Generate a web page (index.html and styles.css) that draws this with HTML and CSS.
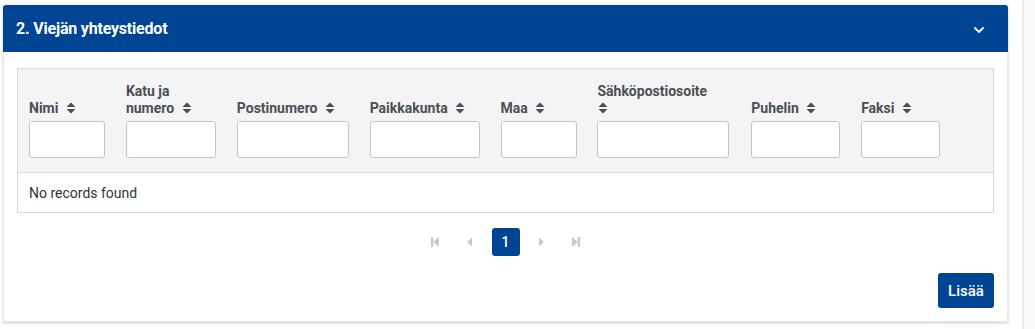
FILE: index.html
```html
<!DOCTYPE html>
<html lang="fi">
<head>
<meta charset="utf-8">
<title>Viejän yhteystiedot</title>
<link rel="stylesheet" href="styles.css">
</head>
<body>
<div class="page">
  <main class="main">
    <section class="panel">
      <header class="panel-head">
        <h2 class="panel-title">2. Viejän yhteystiedot</h2>
        <svg class="chev" width="10" height="6" viewBox="0 0 10 6"><path d="M1 1 L5 5 L9 1" fill="none" stroke="#fff" stroke-width="1.8" stroke-linecap="round" stroke-linejoin="round"/></svg>
      </header>
      <div class="panel-body">
        <div class="table">
          <div class="thead">
            <div class="th c1"><div class="lbl">Nimi <svg class="sort" viewBox="0 0 10 12"><path d="M0.5 5 L5 0.5 L9.5 5Z M0.5 7 L5 11.5 L9.5 7Z"/></svg></div><input class="inp w1" type="text"></div>
            <div class="th c2"><div class="lbl">Katu ja<br>numero <svg class="sort" viewBox="0 0 10 12"><path d="M0.5 5 L5 0.5 L9.5 5Z M0.5 7 L5 11.5 L9.5 7Z"/></svg></div><input class="inp w2" type="text"></div>
            <div class="th c3"><div class="lbl">Postinumero <svg class="sort" viewBox="0 0 10 12"><path d="M0.5 5 L5 0.5 L9.5 5Z M0.5 7 L5 11.5 L9.5 7Z"/></svg></div><input class="inp w3" type="text"></div>
            <div class="th c4"><div class="lbl">Paikkakunta <svg class="sort" viewBox="0 0 10 12"><path d="M0.5 5 L5 0.5 L9.5 5Z M0.5 7 L5 11.5 L9.5 7Z"/></svg></div><input class="inp w4" type="text"></div>
            <div class="th c5"><div class="lbl">Maa <svg class="sort" viewBox="0 0 10 12"><path d="M0.5 5 L5 0.5 L9.5 5Z M0.5 7 L5 11.5 L9.5 7Z"/></svg></div><input class="inp w5" type="text"></div>
            <div class="th c6"><div class="lbl">Sähköpostiosoite<br><svg class="sort" viewBox="0 0 10 12"><path d="M0.5 5 L5 0.5 L9.5 5Z M0.5 7 L5 11.5 L9.5 7Z"/></svg></div><input class="inp w6" type="text"></div>
            <div class="th c7"><div class="lbl">Puhelin <svg class="sort" viewBox="0 0 10 12"><path d="M0.5 5 L5 0.5 L9.5 5Z M0.5 7 L5 11.5 L9.5 7Z"/></svg></div><input class="inp w7" type="text"></div>
            <div class="th c8"><div class="lbl">Faksi <svg class="sort" viewBox="0 0 10 12"><path d="M0.5 5 L5 0.5 L9.5 5Z M0.5 7 L5 11.5 L9.5 7Z"/></svg></div><input class="inp w8" type="text"></div>
          </div>
          <div class="empty">No records found</div>
        </div>
        <nav class="pager">
          <span class="pg-icon"><svg width="12" height="12" viewBox="0 0 12 12"><rect x="2" y="1" width="2.2" height="10"/><path d="M10 1 L4 6 L10 11Z"/></svg></span>
          <span class="pg-icon"><svg width="12" height="12" viewBox="0 0 12 12"><path d="M8 1.5 L3 6 L8 10.5Z"/></svg></span>
          <span class="pg-num">1</span>
          <span class="pg-icon"><svg width="12" height="12" viewBox="0 0 12 12"><path d="M4 1.5 L9 6 L4 10.5Z"/></svg></span>
          <span class="pg-icon"><svg width="12" height="12" viewBox="0 0 12 12"><path d="M2 1 L8 6 L2 11Z"/><rect x="7.8" y="1" width="2.2" height="10"/></svg></span>
        </nav>
        <div class="actions"><button class="btn" type="button">Lisää</button></div>
      </div>
    </section>
  </main>
  <aside class="side"></aside>
</div>
</body>
</html>
```
FILE: styles.css
```css
* { box-sizing: border-box; }
html, body { margin: 0; padding: 0; background: #fff; }
body { font-family: Roboto, "Liberation Sans", Arial, sans-serif; color: #333; }
.page { display: flex; height: 329px; overflow: hidden; }
.main { width: 1022px; padding: 5px 0 0 3px; }
.side { flex: 1; border-left: 2px solid #ececec; background: #f9f9f9; }

.panel {
  width: 1005px;
  background: #fff;
  border: 1px solid #e9e9e9;
  border-top: none;
  border-radius: 3px 3px 2px 2px;
  box-shadow: 0 1px 3px rgba(0,0,0,0.22);
}
.panel-head {
  height: 47px;
  background: #004494;
  border-radius: 3px 3px 0 0;
  display: flex;
  align-items: center;
  justify-content: space-between;
  padding: 0 24px 0 13px;
  margin: 0 -1px;
}
.panel-title { margin: 0; font-size: 16px; font-weight: 700; color: #fff; letter-spacing: -0.2px; }
.chev { margin-top: 2px; }

.panel-body { padding: 16px 13px 13px 13px; }
.table { border: 1px solid #d9d9d9; width: 977px; }
.thead {
  display: flex;
  background: #f4f4f4;
  border-bottom: 1px solid #d9d9d9;
  padding: 14px 0 14px 0;
  height: 104px;
}
.th { display: flex; flex-direction: column; justify-content: flex-end; padding-left: 11px; }
.c1 { width: 97px; } .c2 { width: 111px; } .c3 { width: 133px; } .c4 { width: 131px; }
.c5 { width: 97px; } .c6 { width: 153px; } .c7 { width: 110px; } .c8 { width: 143px; }
.c6 { width: 154px; }
.lbl { font-size: 14px; font-weight: 700; color: #4a4f55; line-height: 17px; margin-bottom: 4px; }
.sort { width: 10px; height: 12px; fill: #4a4f55; margin-left: 4px; vertical-align: -1px; }
.c6 .sort { margin-left: 1px; }
.inp {
  height: 37px;
  border: 1px solid #c4c4c4;
  border-radius: 3px;
  background: #fff;
  margin: 0;
  padding: 0 6px;
}
.w1 { width: 76px; } .w2 { width: 90px; } .w3 { width: 112px; } .w4 { width: 110px; }
.w5 { width: 76px; } .w6 { width: 132px; } .w7 { width: 89px; } .w8 { width: 79px; }

.empty { height: 39px; display: flex; align-items: center; padding-left: 11px; font-size: 14px; color: #333; }

.pager { display: flex; justify-content: center; align-items: center; gap: 0; margin-top: 15px; height: 28px; }
.pg-icon { width: 35px; height: 28px; display: flex; align-items: center; justify-content: center; fill: #c8c8c8; }
.pg-num {
  width: 28px; height: 28px; margin: 0 4px;
  background: #004494; color: #fff; border-radius: 3px;
  display: flex; align-items: center; justify-content: center;
  font-size: 14px; font-weight: 500;
}

.actions { display: flex; justify-content: flex-end; margin-top: 17px; }
.btn {
  width: 56px; height: 35px;
  background: #004494; color: #fff; border: none; border-radius: 3px;
  font-family: inherit; font-size: 15px; font-weight: 500;
  padding: 0;
}
```
